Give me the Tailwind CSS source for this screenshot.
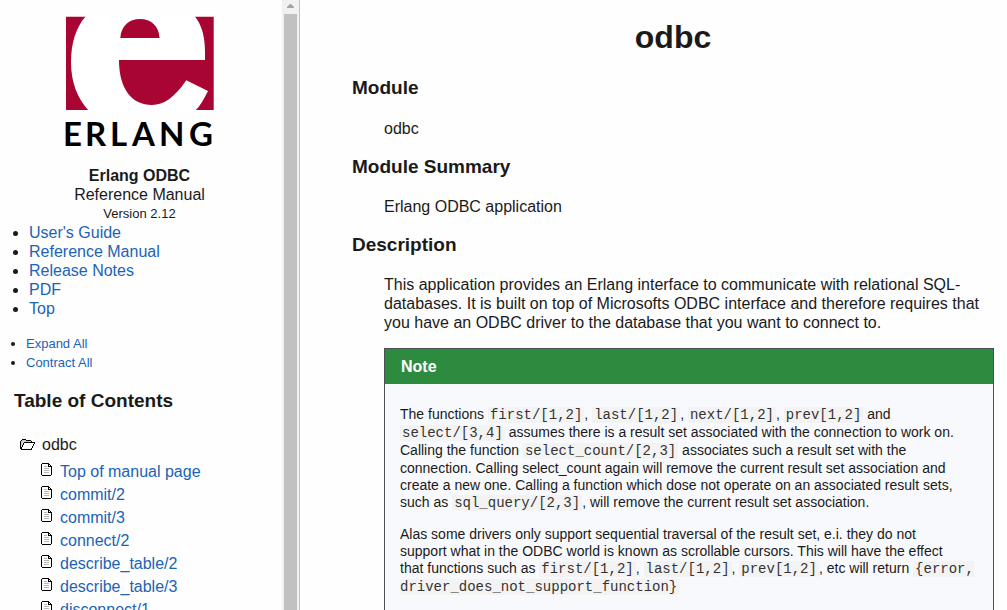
<!DOCTYPE html>
<html lang="en">
<head>
<meta charset="utf-8">
<title>odbc</title>
<script src="https://cdn.jsdelivr.net/npm/@tailwindcss/browser@4"></script>
</head>
<body class="flex h-screen overflow-hidden bg-[#fefefe] font-['Liberation_Sans',Arial,sans-serif] text-base leading-[19px] text-[#1a1a1a]">
<svg class="hidden" aria-hidden="true">
  <symbol id="file" viewBox="0 0 11 13">
    <path fill="#fff" d="M1 1h7l2 3v8H1z"/>
    <path fill="#000" d="M1 0h7v1H1zM0 1h1v11H0zM1 12h9v1H1zM10 3h1v9h-1zM7 1h1v3H7zM8 1h1v1H8zM9 2h1v1H9zM8 3h2v1H8z"/>
    <path fill="#b5b5b5" d="M3 3h3v1H3zM3 5h5v1H3zM3 7h5v1H3zM3 9h5v1H3z"/>
  </symbol>
</svg>
<aside class="w-[282px] shrink-0 overflow-hidden">
  <svg class="ml-[65px] mt-4 h-[132px] w-[150px] overflow-visible" viewBox="0 0 150 132" role="img" aria-label="Erlang">
    <path fill="#a90533" d="M1 .7h147.700v93.300H1z"/>
    <path fill="#fff" d="M21 0C11 11 6 27 6 46c0 20 6 36 18 49h106c5-5 9-12 13-20l-21.700-10.700C109 82 99 89 87 89 67 89 54 73 54 44h86V36C140 21 137 9 129.500 0z"/>
    <path fill="#a90533" d="M55.300 22C56 10 64 3 75 3s19 7 19.500 19z"/>
    <text y="130" fill="#000" font-family="Lato, sans-serif" font-weight="700" font-size="33" x="-2 20 45 67 94 124">ERLANG</text>
  </svg>
  <div class="mt-[18px] pr-[3px] text-center">
    <p class="font-bold">Erlang ODBC</p>
    <p>Reference Manual</p>
    <p class="text-[13px] leading-[19px]">Version 2.12</p>
  </div>
  <ul class="list-disc pl-[29px] text-[#1a1a1a]">
    <li><a href="#" class="text-[#1b63b5]">User's Guide</a></li>
    <li><a href="#" class="text-[#1b63b5]">Reference Manual</a></li>
    <li><a href="#" class="text-[#1b63b5]">Release Notes</a></li>
    <li><a href="#" class="text-[#1b63b5]">PDF</a></li>
    <li><a href="#" class="text-[#1b63b5]">Top</a></li>
  </ul>
  <ul class="mt-4 list-disc pl-[26px] text-[13px] leading-[19px]">
    <li><a href="#" class="text-[#1b63b5]">Expand All</a></li>
    <li><a href="#" class="text-[#1b63b5]">Contract All</a></li>
  </ul>
  <h3 class="mt-[18px] pl-[14px] text-[19px] font-bold leading-[22px]">Table of Contents</h3>
  <div class="mt-[23px] flex items-center gap-[7px] pl-5">
    <svg class="h-[11px] w-[15px]" viewBox="0 0 15 11" shape-rendering="crispEdges">
      <path fill="#ccc" d="M1 2l2-1h4l2 1h3v2H4L1 9z"/>
      <path fill="#fff" d="M4 4h10l-2 6H1z"/>
      <path fill="#000" d="M2 0h4v1H2zM1 1h1v1H1zM6 1h1v1H6zM7 1h4v1H7zM11 2h1v1h-1zM0 2h1v8H0zM4 3h11v1H4zM3 4h1v2H3zM2 6h1v2H2zM1 8h1v2H1zM14 4h1v1h-1zM13 5h1v2h-1zM12 7h1v2h-1zM11 9h1v1h-1zM1 10h11v1H1z"/>
    </svg>
    <span>odbc</span>
  </div>
  <ul class="mt-[6px] pl-[41px] leading-[23px] text-[#1b63b5]">
    <li class="flex gap-2"><svg class="mt-[3px] h-[13px] w-[11px]" shape-rendering="crispEdges"><use href="#file"/></svg><a href="#">Top of manual page</a></li>
    <li class="flex gap-2"><svg class="mt-[3px] h-[13px] w-[11px]" shape-rendering="crispEdges"><use href="#file"/></svg><a href="#">commit/2</a></li>
    <li class="flex gap-2"><svg class="mt-[3px] h-[13px] w-[11px]" shape-rendering="crispEdges"><use href="#file"/></svg><a href="#">commit/3</a></li>
    <li class="flex gap-2"><svg class="mt-[3px] h-[13px] w-[11px]" shape-rendering="crispEdges"><use href="#file"/></svg><a href="#">connect/2</a></li>
    <li class="flex gap-2"><svg class="mt-[3px] h-[13px] w-[11px]" shape-rendering="crispEdges"><use href="#file"/></svg><a href="#">describe_table/2</a></li>
    <li class="flex gap-2"><svg class="mt-[3px] h-[13px] w-[11px]" shape-rendering="crispEdges"><use href="#file"/></svg><a href="#">describe_table/3</a></li>
    <li class="flex gap-2"><svg class="mt-[3px] h-[13px] w-[11px]" shape-rendering="crispEdges"><use href="#file"/></svg><a href="#">disconnect/1</a></li>
  </ul>
</aside>
<div class="flex w-[18px] shrink-0 flex-col border-r border-[#c4c4c4] bg-[#f1f1f1] px-[2px]" aria-hidden="true">
  <div class="flex h-[14px] items-center justify-center pr-px pb-[2px]">
    <svg class="h-1 w-[7px]" viewBox="0 0 7 4"><path fill="#a3a3a3" d="M3 0h1l3 3v1H0V3z"/></svg>
  </div>
  <div class="flex-1 bg-[#c1c1c1]"></div>
</div>
<main class="min-w-0 flex-1 overflow-hidden pl-[52px] pr-[13px]">
  <h1 class="mt-[18px] text-center text-[32px] font-bold leading-[38px]">odbc</h1>
  <h3 class="mt-[21px] text-[19px] font-bold leading-[22px]">Module</h3>
  <p class="mt-5 pl-8">odbc</p>
  <h3 class="mt-[18px] text-[19px] font-bold leading-[22px]">Module Summary</h3>
  <p class="mt-[19px] pl-8">Erlang ODBC application</p>
  <h3 class="mt-[18px] text-[19px] font-bold leading-[22px]">Description</h3>
  <p class="mt-[19px] pl-8">This application provides an Erlang interface to communicate with relational SQL-databases. It is built on top of Microsofts ODBC interface and therefore requires that you have an ODBC driver to the database that you want to connect to.</p>
  <section class="ml-8 mt-4 border border-[#495057] bg-[#f8f9fc]">
    <h4 class="bg-[#2d8b3f] px-4 py-2 font-bold leading-[19px] text-white">Note</h4>
    <div class="flex flex-col gap-[14px] px-[15px] pb-8 pt-[22px] text-[14px] leading-[17px]">
      <p>The functions <code class="bg-[#f3f3f3] px-[2px] font-['Liberation_Mono',monospace] text-[14px] text-[#333]">first/[1,2]</code>, <code class="bg-[#f3f3f3] px-[2px] font-['Liberation_Mono',monospace] text-[14px] text-[#333]">last/[1,2]</code>, <code class="bg-[#f3f3f3] px-[2px] font-['Liberation_Mono',monospace] text-[14px] text-[#333]">next/[1,2]</code>, <code class="bg-[#f3f3f3] px-[2px] font-['Liberation_Mono',monospace] text-[14px] text-[#333]">prev[1,2]</code> and<br><code class="bg-[#f3f3f3] px-[2px] font-['Liberation_Mono',monospace] text-[14px] text-[#333]">select/[3,4]</code> assumes there is a result set associated with the connection to work on.<br>Calling the function <code class="bg-[#f3f3f3] px-[2px] font-['Liberation_Mono',monospace] text-[14px] text-[#333]">select_count/[2,3]</code> associates such a result set with the<br>connection. Calling select_count again will remove the current result set association and<br>create a new one. Calling a function which dose not operate on an associated result sets,<br>such as <code class="bg-[#f3f3f3] px-[2px] font-['Liberation_Mono',monospace] text-[14px] text-[#333]">sql_query/[2,3]</code>, will remove the current result set association.</p>
      <p>Alas some drivers only support sequential traversal of the result set, e.i. they do not<br>support what in the ODBC world is known as scrollable cursors. This will have the effect<br>that functions such as <code class="bg-[#f3f3f3] px-[2px] font-['Liberation_Mono',monospace] text-[14px] text-[#333]">first/[1,2]</code>, <code class="bg-[#f3f3f3] px-[2px] font-['Liberation_Mono',monospace] text-[14px] text-[#333]">last/[1,2]</code>, <code class="bg-[#f3f3f3] px-[2px] font-['Liberation_Mono',monospace] text-[14px] text-[#333]">prev[1,2]</code>, etc will return <code class="bg-[#f3f3f3] px-[2px] font-['Liberation_Mono',monospace] text-[14px] text-[#333]">{error,<br>driver_does_not_support_function}</code></p>
    </div>
  </section>
</main>
</body>
</html>
